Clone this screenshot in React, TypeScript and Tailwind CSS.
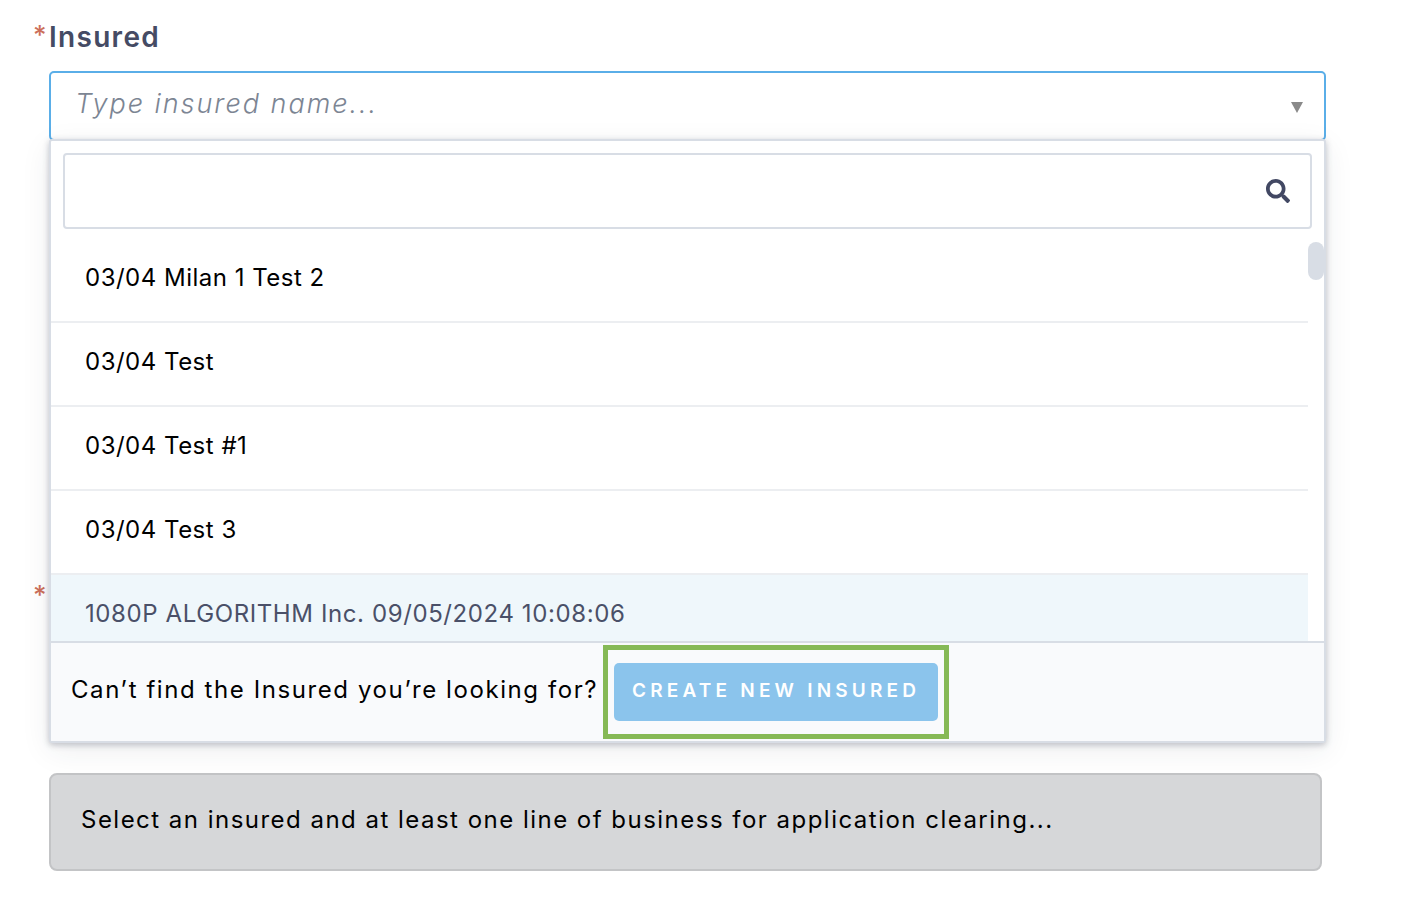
import { FaSearch } from 'react-icons/fa';

const insureds = ['03/04 Milan 1 Test 2', '03/04 Test', '03/04 Test #1', '03/04 Test 3'];

const App = () => {
  return (
    <div className="min-h-[912px] bg-white pl-[49px] pt-[20px] font-['Inter',sans-serif]">
      <div className="relative w-[1277px]">
        <label className="relative block h-[34px] text-[28px] leading-[34px] font-semibold tracking-[1.3px] text-[#454b64]">
          <span className="absolute left-[-16px] top-[-2px] text-[26px] font-medium text-[#cc6f5b]">*</span>
          Insured
        </label>
        <div className="mt-[17px] flex h-[70px] items-center justify-between rounded-[5px] border-2 border-[#5aaee8] pb-[3px] pl-[24px] pr-[21px]">
          <span className="text-[27px] font-light italic tracking-[1.95px] text-[#7c8593]">Type insured name...</span>
          <span className="mt-[5px] h-0 w-0 border-x-[6px] border-t-[11px] border-x-transparent border-t-[#8a8a8a]"></span>
        </div>

        <div className="absolute left-0 top-[119px] z-10 w-[1277px] overflow-hidden rounded-[3px] border-2 border-[#d8dde5] bg-white shadow-[0_2px_6px_rgba(40,45,70,0.28),0_8px_30px_rgba(40,45,70,0.08)]">
          <div className="px-[12px] pt-[12px]">
            <div className="flex h-[76px] items-center justify-end rounded-[4px] border-2 border-[#d8dde5] pr-[20px]">
              <FaSearch size={24} className="mt-[-1px] text-[#424863]" />
            </div>
          </div>
          <div className="relative h-[412px] overflow-hidden pt-[10px]">
            <div className="absolute right-0 top-[13px] h-[38px] w-[16px] rounded-full bg-[#d8dde5]"></div>
            <ul className="w-[1257px]">
              {insureds.map((name) => (
                <li key={name} className="flex h-[84px] items-start border-b-2 border-[#eceef1] pl-[34px] pt-[21px] text-[24px] leading-[36px] tracking-[0.5px] text-black">
                  {name}
                </li>
              ))}
              <li className="flex h-[84px] items-start bg-[#eff7fb] pl-[34px] pt-[21px] text-[24px] leading-[36px] tracking-[0.6px] text-[#4a5068]">
                1080P ALGORITHM Inc. 09/05/2024 10:08:06
              </li>
            </ul>
          </div>
          <div className="flex h-[100px] items-center border-t-2 border-[#d8dde5] bg-[#f9fafc] pl-[20px]">
            <span className="mt-[-4px] text-[24px] tracking-[1.58px] text-black">Can’t find the Insured you’re looking for?</span>
            <div className="ml-[5px] flex h-[94px] w-[346px] items-center justify-center border-[5px] border-[#86b956]">
              <button className="h-[58px] w-[324px] rounded-[5px] bg-[#8bc4ec] pb-[2px] text-[19px] font-semibold tracking-[4.2px] text-white">
                CREATE NEW INSURED
              </button>
            </div>
          </div>
        </div>

        <div className="relative h-[730px]">
          <span className="absolute left-[-16px] top-[434px] text-[26px] font-medium text-[#cc6f5b]">*</span>
          <div className="absolute bottom-0 left-0 flex h-[98px] w-[1273px] items-center rounded-[8px] border-2 border-[#c3c4c6] bg-[#d6d7d9] pb-[5px] pl-[30px] text-[24px] tracking-[1.48px] text-black">
            Select an insured and at least one line of business for application clearing...
          </div>
        </div>
      </div>
    </div>
  );
};

export default App;
